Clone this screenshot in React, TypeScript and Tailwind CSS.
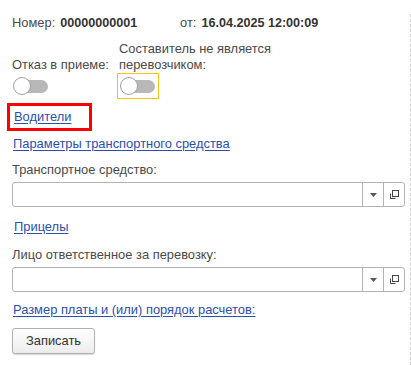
import React from "react";

function Toggle({ focused }: { focused?: boolean }) {
  return (
    <div
      className={
        "-ml-[2px] w-[42px] h-[26px] flex items-center pl-[2px] border " +
        (focused ? "border-[#f5c518]" : "border-transparent")
      }
    >
      <div className="relative w-[35px] h-[18px] flex items-center justify-end">
        <div className="w-[30px] h-[13px] rounded-full bg-[#b8b8b8]" />
        <div className="absolute left-0 top-0 w-[18px] h-[18px] rounded-full bg-white border border-[#a0a0a0]" />
      </div>
    </div>
  );
}

function SelectField() {
  return (
    <div className="mt-[4px] h-[25px] flex border border-[#b3b3b3] rounded-[3px] bg-white">
      <div className="flex-1" />
      <div className="w-[21px] border-l border-[#b3b3b3] flex items-center justify-center">
        <svg width="7" height="4" viewBox="0 0 7 4">
          <path d="M0 0 H7 L3.5 4 Z" fill="#555" />
        </svg>
      </div>
      <div className="w-[21px] border-l border-[#b3b3b3] flex items-center justify-center">
        <svg width="10" height="10" viewBox="0 0 10 10" fill="none" stroke="#444" strokeWidth="1">
          <rect x="3.5" y="0.5" width="6" height="6" />
          <path d="M1.5 3.5 V8.5 H6.5" />
        </svg>
      </div>
    </div>
  );
}

function Link({ text, css }: { text: string; css?: string }) {
  return (
    <a className={"block w-fit text-[12.9px] leading-4 text-[#2a4fb0] underline underline-offset-2 cursor-pointer " + (css ?? "")}>
      {text}
    </a>
  );
}

export default function App() {
  return (
    <div className="w-[411px] h-[365px] bg-white pt-[14px] font-['Liberation_Sans',Arial,sans-serif] text-[12.9px] text-[#4a4a4a] select-none">
      <div className="h-[351px] border-r border-dashed border-[#cfcfcf] pl-3 pr-[5px] flex flex-col">
        <div className="h-[18px] flex items-center">
          <div className="w-[168px] flex items-center">
            <span>Номер:</span>
            <span className="ml-[5px] font-bold text-[12.6px] text-[#333]">00000000001</span>
          </div>
          <span>от:</span>
          <span className="ml-[5px] font-bold text-[12.6px] text-[#333]">16.04.2025 12:00:09</span>
        </div>

        <div className="mt-[9px] flex items-end">
          <div className="w-[107px] flex flex-col">
            <p className="leading-4">Отказ в приеме:</p>
            <Toggle />
          </div>
          <div className="flex flex-col">
            <p className="leading-4">
              Составитель не является
              <br />
              перевозчиком:
            </p>
            <Toggle focused />
          </div>
        </div>

        <div className="-ml-[5px] mt-[4px] w-[85px] h-[28px] border-[3px] border-[#ff0000] pl-[4px] flex items-center">
          <Link text="Водители" />
        </div>

        <Link text="Параметры транспортного средства" css="mt-[5px] ml-[1px]" />

        <p className="mt-[10px] leading-4">Транспортное средство:</p>
        <SelectField />

        <Link text="Прицелы" css="mt-[12px] ml-[2px]" />

        <p className="mt-[12px] leading-4">Лицо ответственное за перевозку:</p>
        <SelectField />

        <Link text="Размер платы и (или) порядок расчетов:" css="mt-[10px] ml-[1px]" />

        <button className="mt-[10px] w-[83px] h-[26px] rounded-[3px] border border-[#b0b0b0] bg-gradient-to-b from-white to-[#ececec] shadow-[0_1px_1px_rgba(0,0,0,0.15)] text-[12.9px] text-[#333]">
          Записать
        </button>
      </div>
    </div>
  );
}
